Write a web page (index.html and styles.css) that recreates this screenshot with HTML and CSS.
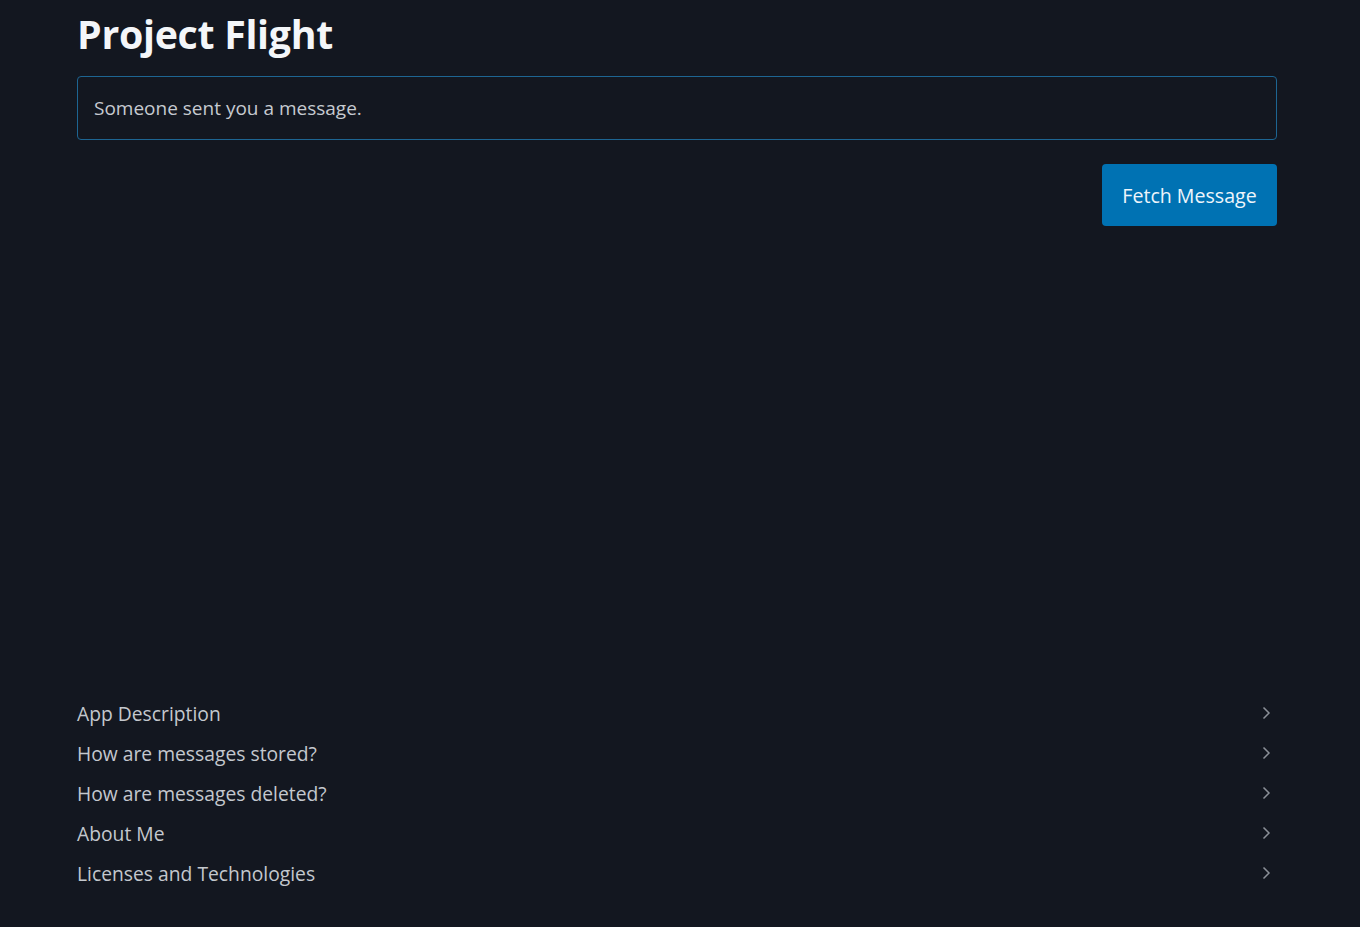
FILE: index.html
```html
<!DOCTYPE html>
<html lang="en">
<head>
<meta charset="utf-8">
<title>Project Flight</title>
<link rel="stylesheet" href="styles.css">
</head>
<body>
<div class="page">
  <main class="main">
    <h1 class="title">Project Flight</h1>
    <div class="message-box">Someone sent you a message.</div>
    <div class="actions">
      <button class="btn-primary" type="button">Fetch Message</button>
    </div>
  </main>
  <ul class="faq">
    <li class="faq-item"><span>App Description</span><svg class="chev" viewBox="0 0 10 16" width="10" height="16"><path d="M2.5 2.5 L8 8 L2.5 13.5" fill="none" stroke="currentColor" stroke-width="1.5"/></svg></li>
    <li class="faq-item"><span>How are messages stored?</span><svg class="chev" viewBox="0 0 10 16" width="10" height="16"><path d="M2.5 2.5 L8 8 L2.5 13.5" fill="none" stroke="currentColor" stroke-width="1.5"/></svg></li>
    <li class="faq-item"><span>How are messages deleted?</span><svg class="chev" viewBox="0 0 10 16" width="10" height="16"><path d="M2.5 2.5 L8 8 L2.5 13.5" fill="none" stroke="currentColor" stroke-width="1.5"/></svg></li>
    <li class="faq-item"><span>About Me</span><svg class="chev" viewBox="0 0 10 16" width="10" height="16"><path d="M2.5 2.5 L8 8 L2.5 13.5" fill="none" stroke="currentColor" stroke-width="1.5"/></svg></li>
    <li class="faq-item"><span>Licenses and Technologies</span><svg class="chev" viewBox="0 0 10 16" width="10" height="16"><path d="M2.5 2.5 L8 8 L2.5 13.5" fill="none" stroke="currentColor" stroke-width="1.5"/></svg></li>
  </ul>
</div>
</body>
</html>
```
FILE: styles.css
```css
* { box-sizing: border-box; }
html, body { margin: 0; padding: 0; }
body {
  background: #131720;
  font-family: "Open Sans", "Noto Sans", sans-serif;
  color: #c9cdd3;
}
.page {
  width: 1200px;
  margin-left: 77px;
  min-height: 927px;
  display: flex;
  flex-direction: column;
}
.main { flex: 1; }
.title {
  margin: 0;
  padding-top: 9px;
  font-size: 39.3px;
  line-height: 50px;
  font-weight: 700;
  color: #f4f6f9;
  letter-spacing: -0.3px;
}
.message-box {
  margin-top: 17px;
  height: 64px;
  border: 1px solid #1d6592;
  border-radius: 4px;
  padding: 0 16px;
  display: flex;
  align-items: center;
  font-size: 19px;
  color: #c6cad0;
}
.actions {
  display: flex;
  justify-content: flex-end;
  margin-top: 24px;
}
.btn-primary {
  background: #0072b3;
  border: none;
  border-radius: 4px;
  color: #eef5fb;
  font-family: inherit;
  font-size: 19.6px;
  width: 175px;
  height: 62px;
  padding: 0;
}
.faq {
  list-style: none;
  margin: 0 0 34px;
  padding: 0;
}
.faq-item {
  height: 40px;
  display: flex;
  align-items: center;
  justify-content: space-between;
  font-size: 19.3px;
  color: #c4c8ce;
}
.chev { color: #8b9098; margin-right: 6px; }
```
